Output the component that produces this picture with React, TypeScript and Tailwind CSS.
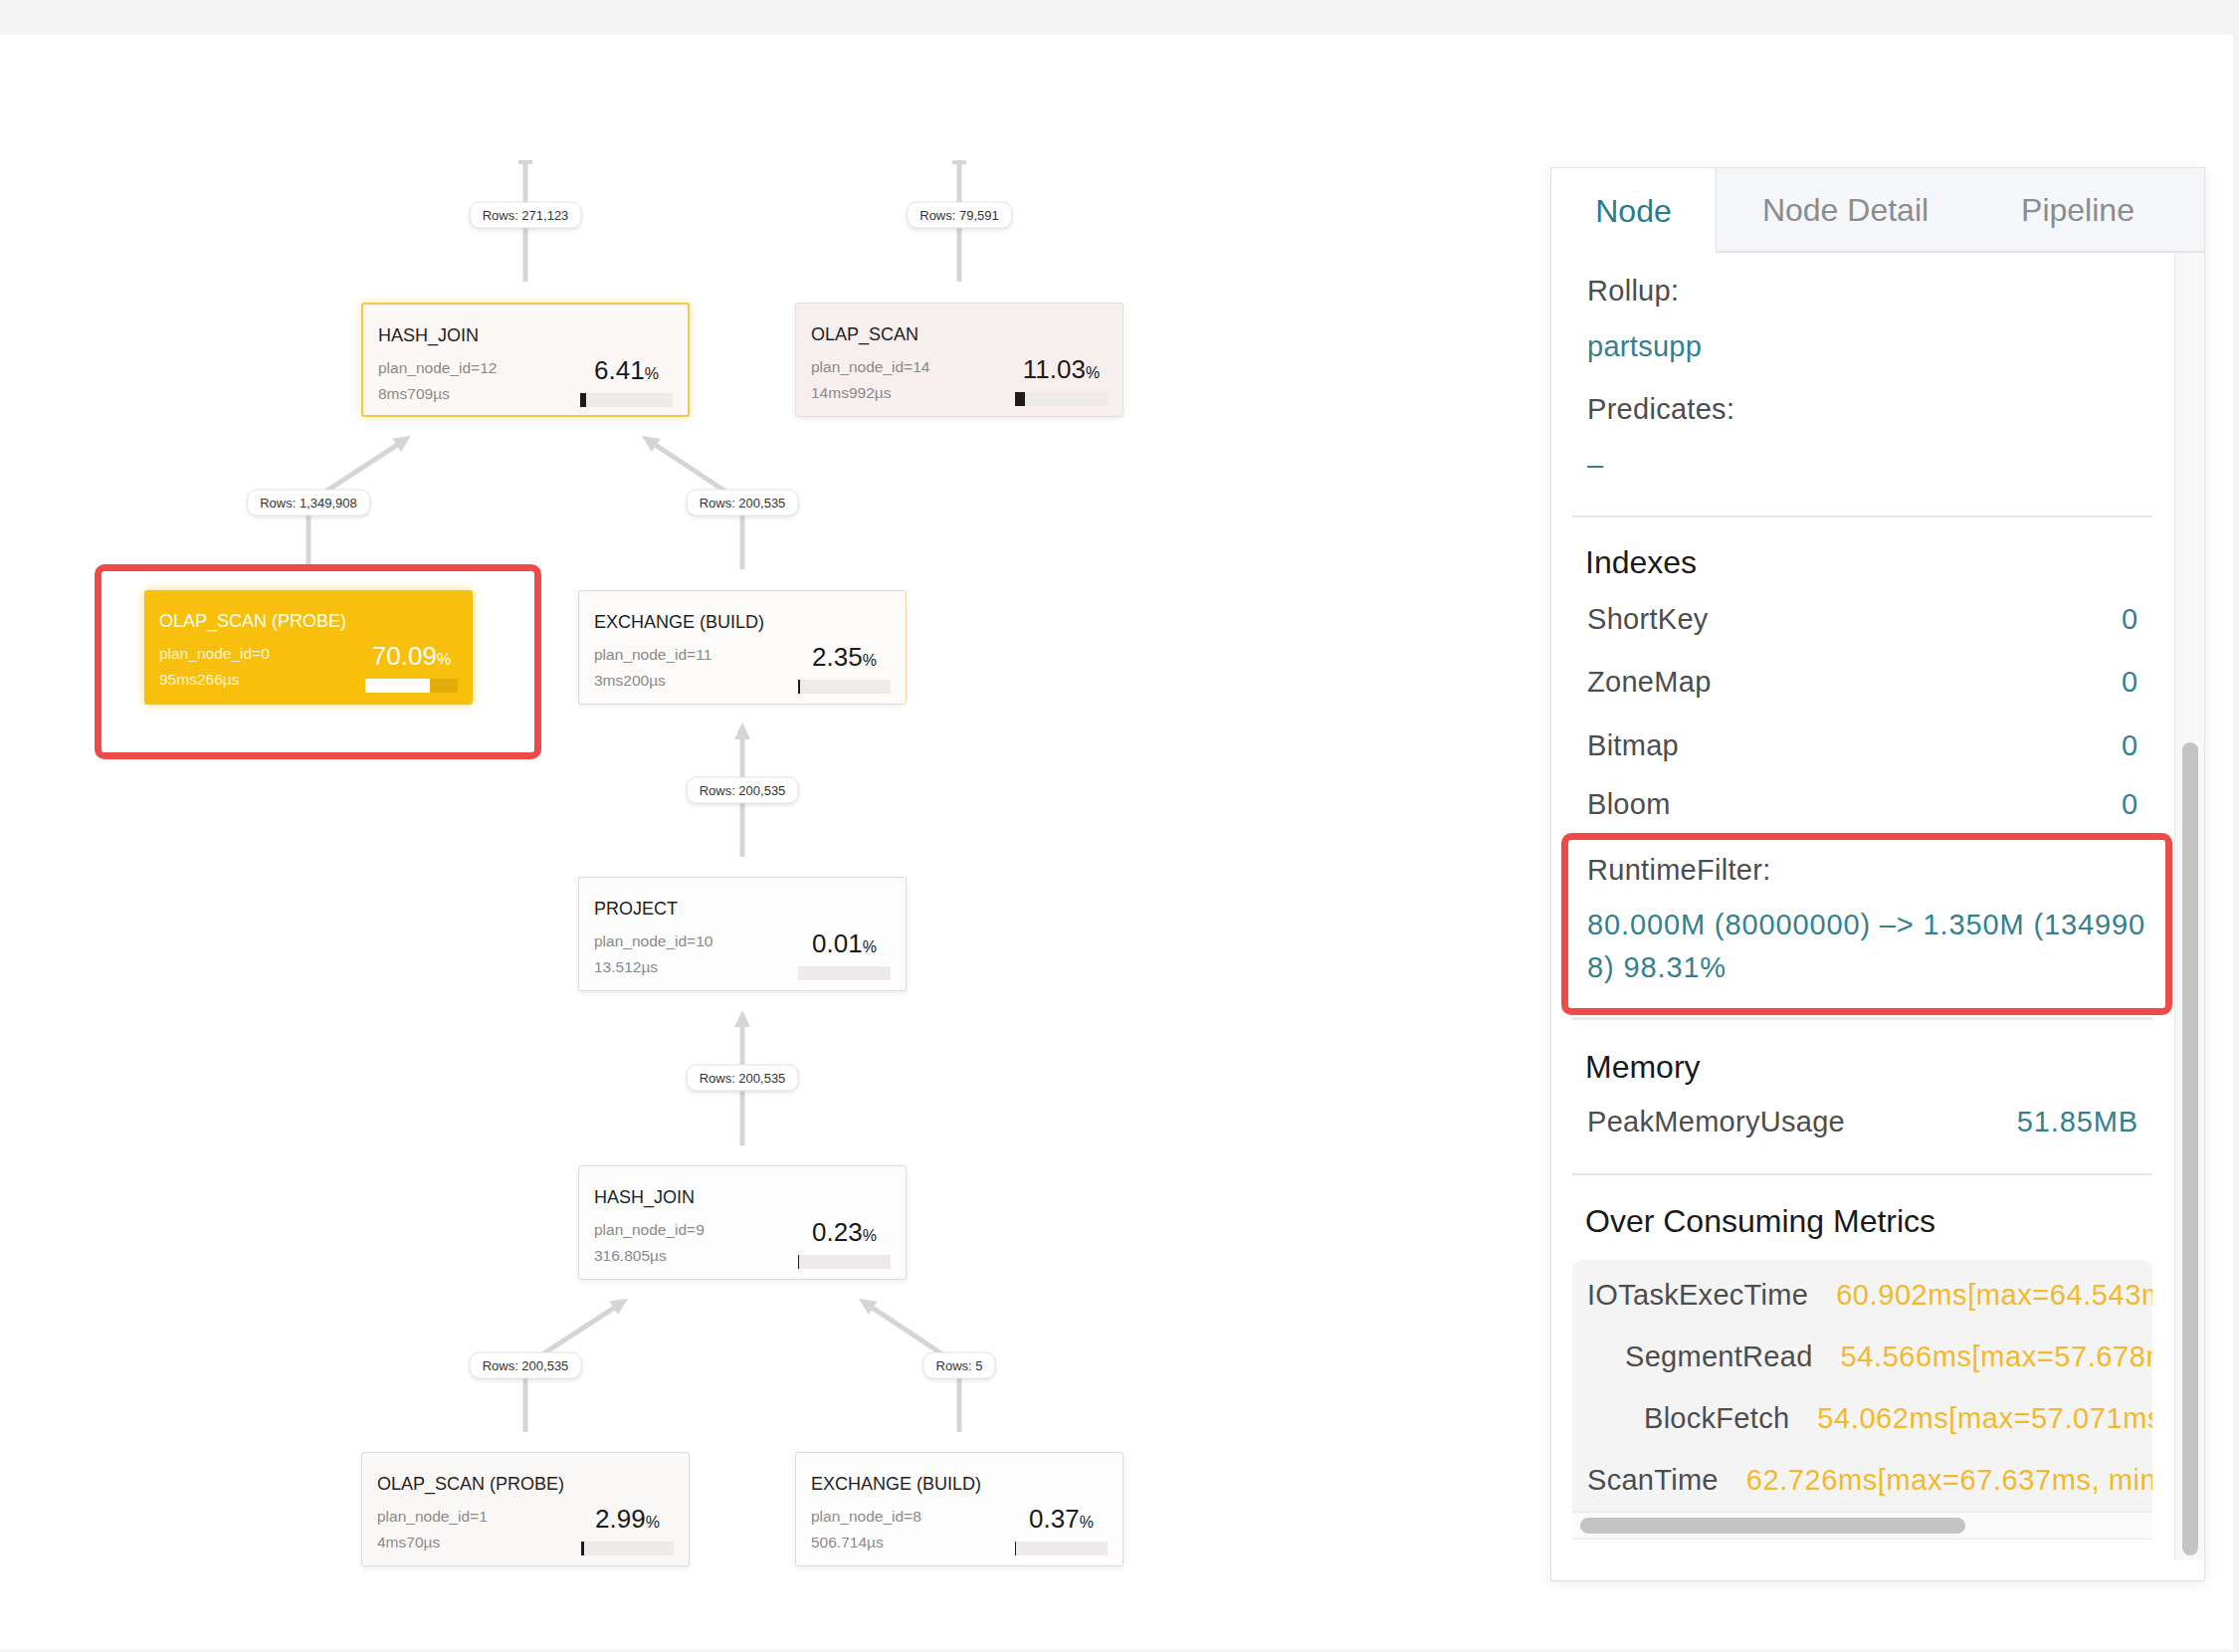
import React from 'react';

const TOP = 35;

type Tone = 'focus' | 'pink' | 'hot' | 'warm' | 'plain' | 'cream';

interface PlanNodeData {
  title: string;
  planId: number;
  time: string;
  pct: number;
  x: number;
  y: number;
  tone: Tone;
}

const nodes: PlanNodeData[] = [
  { title: 'HASH_JOIN', planId: 12, time: '8ms709µs', pct: 6.41, x: 363, y: 304, tone: 'focus' },
  { title: 'OLAP_SCAN', planId: 14, time: '14ms992µs', pct: 11.03, x: 799, y: 304, tone: 'pink' },
  { title: 'OLAP_SCAN (PROBE)', planId: 0, time: '95ms266µs', pct: 70.09, x: 145, y: 593, tone: 'hot' },
  { title: 'EXCHANGE (BUILD)', planId: 11, time: '3ms200µs', pct: 2.35, x: 581, y: 593, tone: 'warm' },
  { title: 'PROJECT', planId: 10, time: '13.512µs', pct: 0.01, x: 581, y: 881, tone: 'plain' },
  { title: 'HASH_JOIN', planId: 9, time: '316.805µs', pct: 0.23, x: 581, y: 1171, tone: 'plain' },
  { title: 'OLAP_SCAN (PROBE)', planId: 1, time: '4ms70µs', pct: 2.99, x: 363, y: 1459, tone: 'cream' },
  { title: 'EXCHANGE (BUILD)', planId: 8, time: '506.714µs', pct: 0.37, x: 799, y: 1459, tone: 'plain' },
];

const toneClass: Record<Tone, string> = {
  focus: 'bg-[#fcf8f6] border-2 border-[#f6c843] shadow-[0_0_8px_rgba(246,200,67,0.45)]',
  pink: 'bg-[#f7eeee] border border-[#e6dddd] shadow-[0_2px_6px_rgba(0,0,0,0.08)]',
  hot: 'bg-[#f8bf0c] shadow-[0_0_10px_rgba(248,191,12,0.55)]',
  warm: 'bg-[#fdfbf9] border border-[#f3d7a6] shadow-[0_2px_6px_rgba(0,0,0,0.06)]',
  plain: 'bg-[#fdfdfd] border border-[#dddddd] shadow-[0_2px_6px_rgba(0,0,0,0.08)]',
  cream: 'bg-[#faf8f7] border border-[#dddddd] shadow-[0_2px_6px_rgba(0,0,0,0.08)]',
};

// edges in page coordinates: points from child up to the arrow tip
interface EdgeData {
  points: [number, number][];
  label: string;
  lx: number;
  ly: number;
  cap?: boolean;
}

const edges: EdgeData[] = [
  { points: [[528, 283], [528, 161]], label: 'Rows: 271,123', lx: 528, ly: 216, cap: true },
  { points: [[964, 283], [964, 161]], label: 'Rows: 79,591', lx: 964, ly: 216, cap: true },
  { points: [[310, 572], [310, 505], [413, 438]], label: 'Rows: 1,349,908', lx: 310, ly: 505 },
  { points: [[746, 572], [746, 505], [645, 438]], label: 'Rows: 200,535', lx: 746, ly: 505 },
  { points: [[746, 861], [746, 726]], label: 'Rows: 200,535', lx: 746, ly: 794 },
  { points: [[746, 1151], [746, 1015]], label: 'Rows: 200,535', lx: 746, ly: 1083 },
  { points: [[528, 1439], [528, 1372], [631, 1305]], label: 'Rows: 200,535', lx: 528, ly: 1372 },
  { points: [[964, 1439], [964, 1372], [863, 1305]], label: 'Rows: 5', lx: 964, ly: 1372 },
];

const EdgeLine = ({ e }: { e: EdgeData }) => {
  const pts = e.points;
  const [fx, fy] = pts[pts.length - 2];
  const [tx, ty] = pts[pts.length - 1];
  if (e.cap) {
    return (
      <g>
        <line x1={pts[0][0]} y1={pts[0][1]} x2={tx} y2={ty} stroke="#d5d5d5" strokeWidth={5} />
        <rect x={tx - 7} y={ty} width={14} height={4} fill="#d5d5d5" />
      </g>
    );
  }
  const len = Math.hypot(tx - fx, ty - fy);
  const ux = (tx - fx) / len;
  const uy = (ty - fy) / len;
  const px = -uy;
  const py = ux;
  const bx = tx - ux * 17;
  const by = ty - uy * 17;
  const body = [...pts.slice(0, -1), [tx - ux * 12, ty - uy * 12]].map(p => p.join(',')).join(' ');
  return (
    <g>
      <polyline points={body} fill="none" stroke="#d5d5d5" strokeWidth={5} strokeLinejoin="round" />
      <polygon points={`${tx},${ty} ${bx + px * 8},${by + py * 8} ${bx - px * 8},${by - py * 8}`} fill="#d5d5d5" />
    </g>
  );
};

const PlanNode = ({ n }: { n: PlanNodeData }) => {
  const hot = n.tone === 'hot';
  const fill = n.pct < 0.1 ? 0 : Math.max(1, (n.pct * 93) / 100);
  return (
    <div
      className={`absolute w-[330px] h-[115px] rounded-[3px] px-[15px] pt-[19px] ${toneClass[n.tone]}`}
      style={{ left: n.x, top: n.y - TOP }}
    >
      <div className={`text-[18px] leading-[24px] font-medium ${hot ? 'text-white' : 'text-[#1f1f1f]'}`}>{n.title}</div>
      <div className="flex justify-between mt-[8px]">
        <div className={`text-[15.5px] leading-[26px] ${hot ? 'text-[#fff4d6]' : 'text-[#8a8a8a]'}`}>
          <div>plan_node_id={n.planId}</div>
          <div>{n.time}</div>
        </div>
        <div className="w-[93px] flex flex-col items-center">
          <div className={`leading-[30px] whitespace-nowrap ${hot ? 'text-white' : 'text-[#1a1a1a]'}`}>
            <span className="text-[26px]">{n.pct.toFixed(2)}</span>
            <span className="text-[16px]">%</span>
          </div>
          <div className={`mt-[4px] w-[93px] h-[14px] ${hot ? 'bg-[#e3ad0a]' : 'bg-[#efebea]'}`}>
            <div className={`h-full ${hot ? 'bg-white' : 'bg-[#1c1c1c]'}`} style={{ width: fill }} />
          </div>
        </div>
      </div>
    </div>
  );
};

const Graph = () => (
  <div className="relative w-[1558px] h-full shrink-0">
    <svg className="absolute inset-0" width={1558} height={1622}>
      <g transform={`translate(0,${-TOP})`}>
        {edges.map((e, i) => <EdgeLine key={i} e={e} />)}
      </g>
    </svg>
    {edges.map((e, i) => (
      <div
        key={i}
        className="absolute -translate-x-1/2 -translate-y-1/2 h-[27px] px-[12px] flex items-center rounded-[10px] bg-white border border-[#e2e2e2] shadow-[0_2px_4px_rgba(0,0,0,0.1)] text-[13px] text-[#333333] whitespace-nowrap"
        style={{ left: e.lx, top: e.ly - TOP }}
      >
        {e.label}
      </div>
    ))}
    {nodes.map(n => <PlanNode key={n.planId} n={n} />)}
    {/* highlight annotation */}
    <div className="absolute left-[95px] top-[532px] w-[449px] h-[196px] border-[7px] border-[#ee4a48] rounded-[10px]" />
  </div>
);

const Row = ({ label, value, h }: { label: string; value: string; h: string }) => (
  <div className={`flex items-center justify-between px-[36px] ${h}`}>
    <span className="text-[#4d4d4d] tracking-[0.01em]">{label}</span>
    <span className="text-[#35808d] tracking-[0.03em]">{value}</span>
  </div>
);

const metrics = [
  { name: 'IOTaskExecTime', value: '60.902ms[max=64.543ms, min=57.261ms]', indent: 'pl-[15px]' },
  { name: 'SegmentRead', value: '54.566ms[max=57.678ms, min=51.454ms]', indent: 'pl-[53px]' },
  { name: 'BlockFetch', value: '54.062ms[max=57.071ms, min=51.053ms]', indent: 'pl-[72px]' },
  { name: 'ScanTime', value: '62.726ms[max=67.637ms, min=57.815ms]', indent: 'pl-[15px]' },
];

const Heading = ({ children, mt }: { children: React.ReactNode; mt: string }) => (
  <div className={`${mt} h-[56px] flex items-center px-[34px] text-[32px] text-[#1a1a1a]`}>{children}</div>
);

const SidePanel = () => (
  <div className="mt-[133px] w-[658px] h-[1421px] bg-white border border-[#e3e3e3] shadow-[0_2px_14px_rgba(0,0,0,0.08)] flex flex-col text-[29px]">
    {/* Tabs */}
    <div className="flex h-[85px] shrink-0 text-[32px]">
      <div className="w-[166px] bg-white border-r border-[#e2e2e2] flex items-center justify-center text-[#2c7b89]">Node</div>
      <div className="flex-1 flex bg-[#f5f6fa] border-b-2 border-[#e4e4e4]">
        <div className="w-[259px] flex items-center justify-center text-[#8c8c8c]">Node Detail</div>
        <div className="w-[208px] flex items-center justify-center text-[#8c8c8c]">Pipeline</div>
      </div>
    </div>

    <div className="flex h-[1314px] shrink-0">
      {/* Content */}
      <div className="w-[626px] h-full overflow-hidden pt-[11px]">
        <div className="h-[56px] flex items-center px-[36px] text-[#4d4d4d] tracking-[0.01em]">Rollup:</div>
        <div className="h-[56px] flex items-center px-[36px] text-[#35808d] tracking-[0.01em]">partsupp</div>
        <div className="mt-[7px] h-[56px] flex items-center px-[36px] text-[#4d4d4d] tracking-[0.01em]">Predicates:</div>
        <div className="h-[56px] flex items-center px-[36px] text-[#35808d]">–</div>
        <div className="mt-[22px] ml-[21px] mr-[22px] h-[2px] bg-[#e6e6e6]" />

        <Heading mt="mt-[17px]">Indexes</Heading>
        <Row label="ShortKey" value="0" h="h-[60px]" />
        <Row label="ZoneMap" value="0" h="h-[66px]" />
        <Row label="Bitmap" value="0" h="h-[62px]" />
        <Row label="Bloom" value="0" h="h-[56px]" />

        <div className="ml-[10px] mr-[2px] h-[183px] border-[7px] border-[#ee4a48] rounded-[10px] pl-[19px] pt-[7px]">
          <div className="h-[48px] flex items-center text-[#4d4d4d] tracking-[0.01em]">RuntimeFilter:</div>
          <div className="mt-[9px] leading-[43px] text-[#35808d] whitespace-nowrap tracking-[0.03em]">
            <div>80.000M (80000000) –&gt; 1.350M (134990</div>
            <div>8) 98.31%</div>
          </div>
        </div>
        <div className="mt-[2px] ml-[21px] mr-[22px] h-[3px] bg-[#e8e8e8]" />

        <Heading mt="mt-[19px]">Memory</Heading>
        <Row label="PeakMemoryUsage" value="51.85MB" h="h-[56px]" />
        <div className="mt-[23px] ml-[21px] mr-[22px] h-[2px] bg-[#e6e6e6]" />

        <Heading mt="mt-[18px]">Over Consuming Metrics</Heading>
        <div className="mt-[11px] ml-[21px] mr-[22px] overflow-hidden">
          <div className="bg-[#f4f4f4] rounded-t-[10px] pt-[5px]">
            {metrics.map(m => (
              <div key={m.name} className={`h-[62px] flex items-center gap-[28px] whitespace-nowrap ${m.indent}`}>
                <span className="text-[#4d4d4d] tracking-[0.01em]">{m.name}</span>
                <span className="text-[#f3b82c] tracking-[0.02em]">{m.value}</span>
              </div>
            ))}
          </div>
          <div className="h-[28px] bg-[#fafafa] border-y border-[#e9e9e9] flex items-center">
            <div className="ml-[8px] w-[387px] h-[16px] rounded-full bg-[#c4c4c4]" />
          </div>
        </div>
      </div>

      {/* Vertical scrollbar */}
      <div className="w-[30px] h-full bg-[#f8f8f8] border-l border-[#e6e6e6]">
        <div className="mt-[492px] ml-[7px] w-[16px] h-[817px] rounded-full bg-[#c4c4c4]" />
      </div>
    </div>
  </div>
);

export default function App() {
  return (
    <div className="w-[2250px] h-[1660px] bg-[#f4f4f4] pt-[35px] font-['Liberation_Sans',Arial,sans-serif]">
      <div className="w-[2244px] h-[1622px] bg-white flex">
        <Graph />
        <SidePanel />
      </div>
    </div>
  );
}
